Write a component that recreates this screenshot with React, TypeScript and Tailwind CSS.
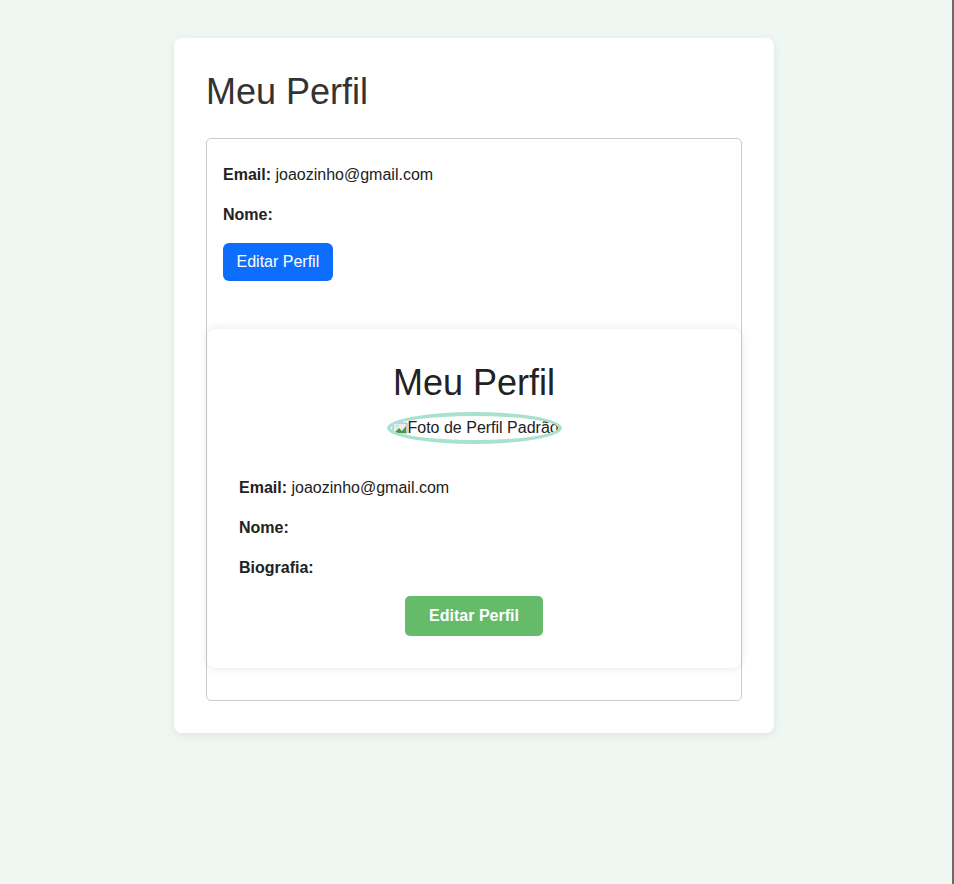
import React from "react";

function BrokenImage() {
    return (
        <svg width="16" height="16" viewBox="0 0 16 16" className="shrink-0">
            <path d="M1 3 H15 V13 H1 Z" fill="#e8eef5" stroke="#9aa8b8" strokeWidth="1" />
            <path d="M2 13 L7 8 L10 11 L14 6 L14 13 Z" fill="#4a9a3a" />
            <circle cx="5" cy="6" r="1.5" fill="#cfd8e3" />
        </svg>
    );
}

export default function App() {
    return (
        <div className="min-h-[884px] bg-[#eff7f3] border-r-2 border-[#6b6b6b] font-['Liberation_Sans',Arial,sans-serif] text-[16px]">
            <div className="pt-[38px] flex justify-center">
                <div className="w-[600px] bg-white rounded-lg shadow-[0_2px_10px_rgba(0,0,0,0.08)] p-8 -ml-[4px]">
                    <h1 className="text-[36px] leading-[40px] text-[#333] mt-[2px] mb-[26px]">Meu Perfil</h1>

                    <div className="border border-[#cccccc] rounded-[5px] p-4">
                        <p className="text-[#222] leading-[24px] mt-[8px]">
                            <b>Email:</b> joaozinho@gmail.com
                        </p>
                        <p className="text-[#222] leading-[24px] mt-[16px]">
                            <b>Nome:</b>
                        </p>
                        <button className="mt-[16px] bg-[#0d6efd] text-white rounded-[6px] px-[13.5px] h-[38px] leading-[38px]">
                            Editar Perfil
                        </button>

                        <div className="mt-[48px] -mx-4 bg-white rounded-lg shadow-[0_0_10px_rgba(0,0,0,0.1)] px-8 pt-[34px] pb-8">
                            <h2 className="text-center text-[36px] leading-[40px] text-[#222]">Meu Perfil</h2>
                            <div className="flex justify-center mt-[9px]">
                                <div className="w-[175px] h-[32px] rounded-[50%] border-[4px] border-[#a8e2cc] overflow-hidden flex items-center pl-[1px] text-[#222] text-[16px] leading-none whitespace-nowrap">
                                    <BrokenImage />
                                    <span>Foto de Perfil Padrão</span>
                                </div>
                            </div>
                            <p className="text-[#222] leading-[24px] mt-[32px]">
                                <b>Email:</b> joaozinho@gmail.com
                            </p>
                            <p className="text-[#222] leading-[24px] mt-[16px]">
                                <b>Nome:</b>
                            </p>
                            <p className="text-[#222] leading-[24px] mt-[16px]">
                                <b>Biografia:</b>
                            </p>
                            <div className="flex justify-center mt-[16px]">
                                <button className="bg-[#66bb6a] text-white font-bold rounded-[5px] w-[138px] h-[40px]">
                                    Editar Perfil
                                </button>
                            </div>
                        </div>
                        <div className="h-4" />
                    </div>
                </div>
            </div>
        </div>
    );
}
